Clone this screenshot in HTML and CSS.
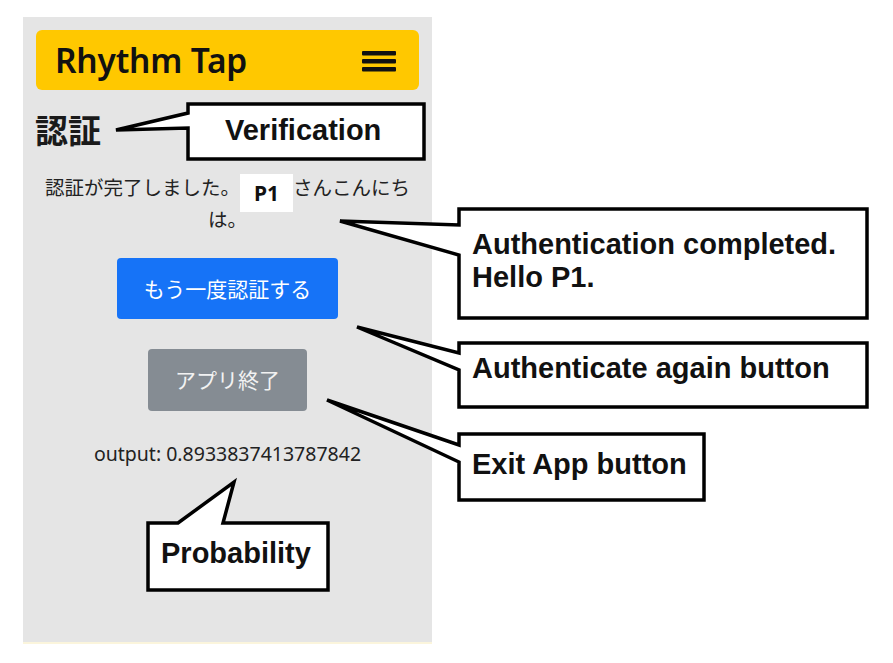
FILE: index.html
```html
<!DOCTYPE html>
<html lang="ja">
<head>
<meta charset="utf-8">
<title>Rhythm Tap - 認証</title>
<link rel="stylesheet" href="styles.css">
</head>
<body>
<div class="phone">
  <header class="appbar">
    <span class="brand">Rhythm Tap</span>
    <svg class="menu" width="34" height="21" viewBox="0 0 34 21" aria-hidden="true">
      <rect x="0" y="0" width="34" height="4.5" rx="1"/>
      <rect x="0" y="8" width="34" height="4.5" rx="1"/>
      <rect x="0" y="16" width="34" height="4.5" rx="1"/>
    </svg>
  </header>
  <h2 class="title">認証</h2>
  <p class="message">認証が完了しました。<span class="user">P1</span>さんこんにちは。</p>
  <button class="btn btn-primary">もう一度認証する</button>
  <button class="btn btn-secondary">アプリ終了</button>
  <p class="output">output: 0.8933837413787842</p>
</div>

<div class="notes">
  <svg class="bubbles" width="893" height="663" viewBox="0 0 893 663" aria-hidden="true">
    <path d="M188,104 H424 V159 H188 V128 L116,130 L188,113 Z"/>
    <path d="M459,209 H867 V318 H459 V255 L340,221 L459,225 Z"/>
    <path d="M459,343 H867 V407 H459 V370 L357,327 L459,353 Z"/>
    <path d="M459,434 H704 V500 H459 V462 L327,400 L459,445 Z"/>
    <path d="M148,523 H178 L234,482 L223,523 H328 V590 H148 Z"/>
  </svg>
  <div class="note note-verify">Verification</div>
  <div class="note note-auth">Authentication completed.<br>Hello P1.</div>
  <div class="note note-again">Authenticate again button</div>
  <div class="note note-exit">Exit App button</div>
  <div class="note note-prob">Probability</div>
</div>
</body>
</html>
```

FILE: styles.css
```css
html, body {
  margin: 0;
  padding: 0;
  background: #ffffff;
}

body {
  width: 893px;
  height: 663px;
  position: relative;
  overflow: hidden;
  font-family: "Noto Sans", "Noto Sans CJK JP", sans-serif;
}

.phone {
  margin: 17px 0 0 23px;
  width: 409px;
  height: 625px;
  box-sizing: border-box;
  padding: 13px 13px 0 13px;
  background: #e5e5e5;
  box-shadow: 0 2px 0 #fbf5dc;
  display: flex;
  flex-direction: column;
  align-items: center;
}

.appbar {
  align-self: stretch;
  height: 60px;
  background: #ffc800;
  border-radius: 6px;
  display: flex;
  align-items: center;
  justify-content: space-between;
  padding: 0 23px 0 19px;
}

.brand {
  font-size: 33.5px;
  font-weight: 600;
  color: #111111;
  letter-spacing: -0.2px;
  line-height: 40px;
  margin-top: -1px;
}

.menu {
  fill: #111111;
  margin-top: 3px;
}

.title {
  align-self: stretch;
  margin: 20px 0 0 -1px;
  font-family: "Noto Sans CJK JP", sans-serif;
  font-size: 33px;
  font-weight: 700;
  line-height: 38px;
  color: #1a1a1a;
}

.message {
  margin: 26px 0 0 0;
  font-size: 19.5px;
  line-height: 27px;
  color: #222222;
  text-align: center;
  align-self: stretch;
}

.user {
  display: inline-block;
  background: #ffffff;
  font-weight: 700;
  font-size: 21px;
  line-height: 28px;
  padding: 5px 14px;
  color: #111111;
  vertical-align: -6px;
  margin: -6px 0;
}

.btn {
  font-family: "Noto Sans CJK JP", sans-serif;
  font-size: 21px;
  line-height: 29px;
  color: #ffffff;
  border: 0;
  border-radius: 4px;
  padding: 16px 27px;
}

.btn-primary {
  margin-top: 25px;
  background: #1673f7;
}

.btn-secondary {
  margin-top: 30px;
  padding-bottom: 17px;
  background: #858c93;
  color: #f2f2f2;
}

.output {
  margin: 29px 0 0 0;
  font-size: 19.5px;
  line-height: 28px;
  color: #222222;
}

.notes {
  position: absolute;
  left: 0;
  top: 0;
  width: 893px;
  height: 663px;
  pointer-events: none;
}

.bubbles {
  position: absolute;
  left: 0;
  top: 0;
}

.bubbles path {
  fill: #ffffff;
  stroke: #000000;
  stroke-width: 3.5;
  stroke-linejoin: miter;
}

.note {
  position: absolute;
  font-family: "Liberation Sans", Arial, sans-serif;
  font-weight: 700;
  font-size: 29px;
  line-height: 33px;
  color: #111111;
  white-space: nowrap;
}

.note-verify { left: 225px; top: 114px; }
.note-auth { left: 472px; top: 228px; }
.note-again { left: 472px; top: 352px; }
.note-exit { left: 472px; top: 448px; }
.note-prob { left: 161px; top: 537px; }
```
